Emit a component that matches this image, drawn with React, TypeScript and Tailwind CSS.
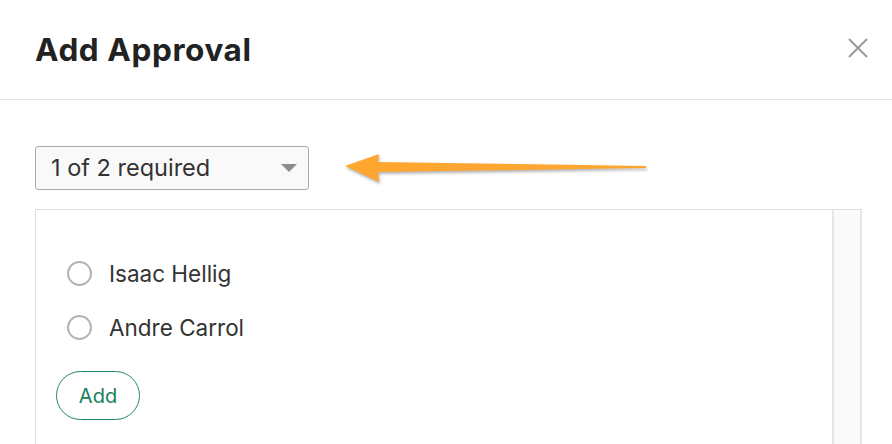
export default function App() {
  const approvers = ["Isaac Hellig", "Andre Carrol"];

  return (
    <div className="h-[444px] w-[892px] overflow-hidden bg-white font-['Inter',sans-serif] text-[#262626]">
      <div className="flex h-[100px] items-center justify-between border-b border-[#e3e3e3] pl-[35px] pr-[24px]">
        <h1 className="text-[31.5px] font-bold tracking-[0.6px] text-[#222]">Add Approval</h1>
        <svg width="20" height="20" viewBox="0 0 20 20" className="mb-[3px]">
          <path d="M1 1 L19 19 M19 1 L1 19" stroke="#9a9a9a" strokeWidth="2" />
        </svg>
      </div>

      <div className="pl-[35px] pr-[30px] pt-[46px]">
        <div className="relative flex items-center">
          <div className="flex h-[44px] w-[274px] items-center justify-between rounded-[3px] border border-[#a8a8a8] bg-[#f9f9f9] pl-[15px] pr-[11px]">
            <span className="text-[23.5px] text-[#333]">1 of 2 required</span>
            <svg width="16" height="8" viewBox="0 0 16 8">
              <path d="M0 0 H16 L8 8 Z" fill="#8c8c8c" />
            </svg>
          </div>
          <svg width="310" height="40" viewBox="0 0 310 40" className="ml-[36px] mt-[-1px]" style={{ filter: "drop-shadow(1px 2px 1.5px rgba(0,0,0,0.3))" }}>
            <path d="M0 18 L34 6 L33 14 L301 18 L301 20 L33 24 L34 34 Z" fill="#ffa630" />
          </svg>
        </div>

        <div className="mt-[19px] flex h-[240px] border-l border-t border-[#dedede]">
          <div className="flex-1 pl-[31px] pt-[51px]">
            <div className="flex flex-col gap-[29px]">
              {approvers.map((name) => (
                <label key={name} className="flex items-center gap-[17px] leading-[25px]">
                  <span className="h-[25px] w-[25px] rounded-full border-2 border-[#b3b3b3] bg-white" />
                  <span className="text-[22.5px] text-[#333]">{name}</span>
                </label>
              ))}
            </div>
            <button className="ml-[-11px] mt-[31px] h-[49px] w-[84px] rounded-full border border-[#23875f] text-[20px] text-[#17805a]">
              Add
            </button>
          </div>
          <div className="w-[30px] border-x-2 border-[#e6e6e6] bg-[#fafafa]" />
        </div>
      </div>
    </div>
  );
}
